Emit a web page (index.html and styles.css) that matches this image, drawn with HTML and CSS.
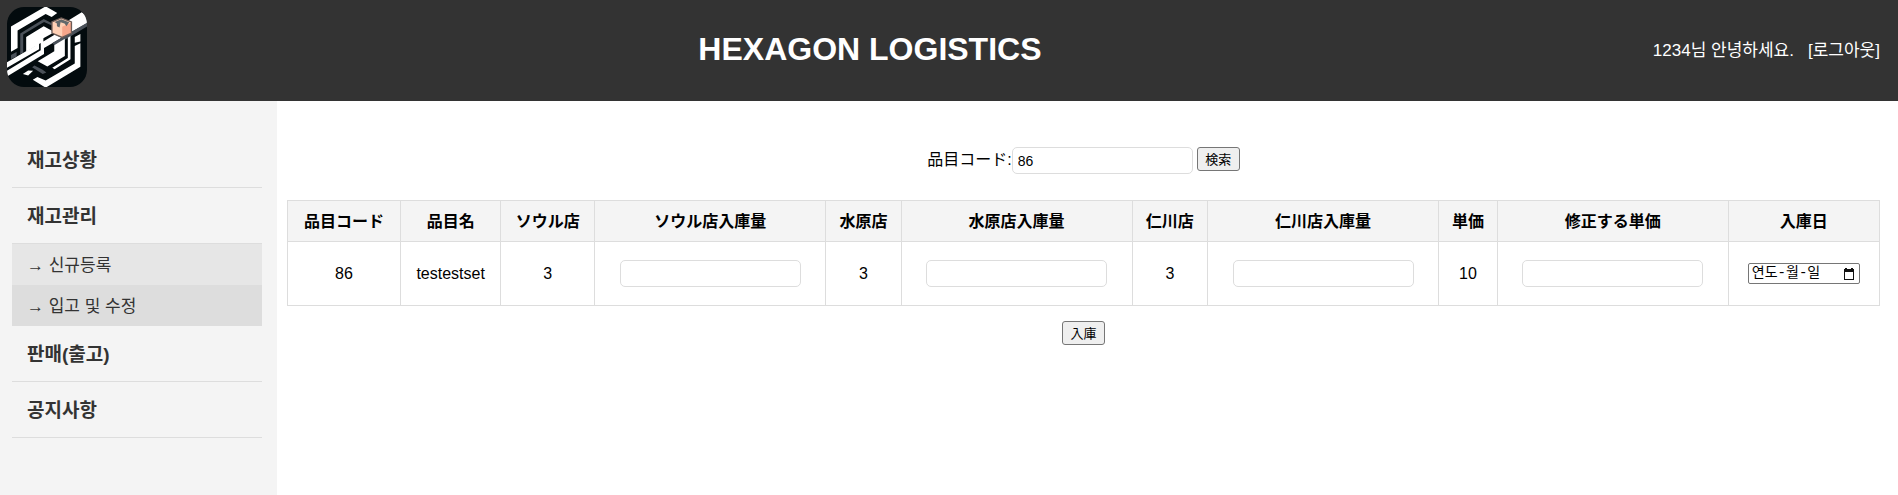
FILE: index.html
```html
<!DOCTYPE html>
<html lang="ko">
<head>
<meta charset="utf-8">
<title>HEXAGON LOGISTICS</title>
<link rel="stylesheet" href="styles.css">
</head>
<body>
<header class="header">
  <a class="logo" href="#" aria-label="HEXAGON LOGISTICS">
    <svg class="logo-image" viewBox="20 20 242 242" aria-hidden="true">
      <defs><clipPath id="logo-clip"><rect x="20" y="20" width="242" height="242" rx="52"/></clipPath></defs>
      <g clip-path="url(#logo-clip)">
        <rect x="20" y="20" width="242" height="242" fill="#030b0e"/>
        <path fill="#fff" d="M32 79 137 18 172 38 155 50 137 41 52 91V144L32 155Z"/>
        <path fill="#fff" d="M78 111 131 78 156 92V100L112 124V136L78 155Z"/>
        <path fill="#fff" d="M20 187 105 138V121L130 107V124L165 103 186 113 132 144V162L20 230V213L122 151V129L117 132V148L20 204Z"/>
        <path fill="#fff" d="M208 59 246 36 262 46V69L215 96Z"/>
        <path fill="#4a5159" d="M60 100 131 56 156 69V76L132 65 69 103V158L60 163ZM32 165 49 156V170L32 178ZM262 68V79L165 137 157 129ZM96 202 103 197 128 210 139 218 128 223Z"/>
        <path fill="#fff" d="M163 136 195 116V168L142 200 113 184 132 173 163 154Z"/>
        <path fill="#fff" d="M204 113 212 108V178L164 208 157 204 204 174Z"/>
        <path fill="#fff" d="M225 111 242 102V124L225 128ZM225 138 242 130V201L137 264 98 240 112 232 137 242 225 191ZM68 223 84 212 99 213 84 227Z"/>
        <path fill="#ffd0b5" d="M156 65 184 53 215 65V99L187 112 156 99Z"/>
        <path fill="#f6a68b" d="M187 80 215 67V99L187 112Z"/>
        <path fill="none" stroke="#6c5c57" stroke-width="4" d="M156 65 184 53 215 65V99L187 112 156 99Z"/>
        <path fill="#62686b" d="M164 65 184 57 208 66 200 78 194 70 182 66 179 82 171 78V70Z"/>
      </g>
    </svg>
  </a>
  <h1 class="title">HEXAGON LOGISTICS</h1>
  <div class="account"><span>1234님 안녕하세요.</span><a href="#">[로그아웃]</a></div>
</header>
<div class="page">
  <nav class="sidebar">
    <ul class="menu">
      <li><a class="menu-link" href="#">재고상황</a></li>
      <li><a class="menu-link" href="#">재고관리</a>
        <ul class="submenu">
          <li><a class="submenu-link" href="#">→ 신규등록</a></li>
          <li><a class="submenu-link current" href="#">→ 입고 및 수정</a></li>
        </ul>
      </li>
      <li><a class="menu-link" href="#">판매(출고)</a></li>
      <li><a class="menu-link" href="#">공지사항</a></li>
    </ul>
  </nav>
  <main class="content" lang="ja">
    <form class="search">
      <label for="code">品目コード:</label>
      <input class="field" id="code" type="text" value="86">
      <button class="button" type="button">検索</button>
    </form>
    <form class="stock">
      <table class="stock-table">
        <colgroup>
          <col class="col-code"><col class="col-name"><col class="col-seoul"><col class="col-entry"><col class="col-count"><col class="col-entry"><col class="col-count"><col class="col-entry"><col class="col-price"><col class="col-entry"><col class="col-date">
        </colgroup>
        <thead>
          <tr><th>品目コード</th><th>品目名</th><th>ソウル店</th><th>ソウル店入庫量</th><th>水原店</th><th>水原店入庫量</th><th>仁川店</th><th>仁川店入庫量</th><th>単価</th><th>修正する単価</th><th>入庫日</th></tr>
        </thead>
        <tbody>
          <tr>
            <td>86</td><td>testestset</td><td>3</td>
            <td><input class="field" type="text" aria-label="ソウル店入庫量"></td>
            <td>3</td>
            <td><input class="field" type="text" aria-label="水原店入庫量"></td>
            <td>3</td>
            <td><input class="field" type="text" aria-label="仁川店入庫量"></td>
            <td>10</td>
            <td><input class="field" type="text" aria-label="修正する単価"></td>
            <td>
              <span class="date" lang="ko">
                <input class="date-input" type="text" placeholder="연도-월-일" aria-label="入庫日">
                <button class="date-button" type="button" aria-label="달력">
                  <svg class="date-icon" viewBox="0 0 12 12" aria-hidden="true"><path fill="#111" d="M2 0h2v1h4V0h2v1h1v11H1V1h1zM2 4v7h8V4z"/></svg>
                </button>
              </span>
            </td>
          </tr>
        </tbody>
      </table>
      <button class="button" type="button">入庫</button>
    </form>
  </main>
</div>
</body>
</html>
```
FILE: styles.css
```css
* { box-sizing: border-box; }

body {
  margin: 0;
  min-height: 100vh;
  display: flex;
  flex-direction: column;
  background: #fff;
  color: #000;
  font: 16px/20px "Liberation Sans", "Noto Sans CJK KR", sans-serif;
}

a { color: inherit; text-decoration: none; }

ul { margin: 0; padding: 0; list-style: none; }

.header {
  display: flex;
  align-items: center;
  justify-content: space-between;
  padding: 7px 18px 14px 7px;
  background: #333;
  color: #fff;
}

.logo-image { display: block; width: 80px; height: 80px; }

.title { margin: 0; padding-top: 4px; font-size: 32px; line-height: 36px; }

.account { display: flex; gap: 14px; padding-top: 8px; font-size: 17px; }

.page { flex: 1; display: flex; }

.sidebar {
  flex: none;
  width: 277px;
  padding: 31px 15px 30px 12px;
  background: #f4f4f4;
  color: #333;
}

.menu-link {
  display: block;
  padding: 16px 15px 14px;
  border-bottom: 1px solid #ddd;
  font-size: 19px;
  line-height: 25px;
  font-weight: bold;
}

.submenu-link {
  display: block;
  padding: 11px 15px 9px;
  background: #e6e6e6;
  font-size: 17px;
  line-height: 21px;
}

.submenu-link.current { background: #ddd; }

.content {
  flex: 1;
  min-width: 0;
  padding: 46px 18px 20px 10px;
  font-family: "Liberation Sans", "Noto Sans CJK JP", sans-serif;
}

.search {
  display: flex;
  justify-content: center;
  align-items: flex-start;
  margin-bottom: 26px;
}

.search label { line-height: 25px; }

.search .button { margin-left: 4px; }

.field {
  width: 181px;
  height: 27px;
  padding: 5px;
  border: 1px solid #ddd;
  border-radius: 5px;
  background: #fff;
  color: #000;
  font: 14px/16px "Liberation Sans", sans-serif;
  vertical-align: middle;
}

.button {
  width: 43px;
  height: 24px;
  padding: 0;
  border: 1px solid #767676;
  border-radius: 3px;
  background: #efefef;
  color: #000;
  font: 13px/20px "Noto Sans CJK JP", sans-serif;
}

.stock {
  display: flex;
  flex-direction: column;
  align-items: center;
  gap: 15px;
}

.stock-table {
  width: 100%;
  table-layout: fixed;
  border-collapse: collapse;
  text-align: center;
}

.stock-table th,
.stock-table td { border: 1px solid #ddd; padding: 10px 0; }

.stock-table th { padding: 11px 0 9px; background: #f4f4f4; white-space: nowrap; }

.stock-table td { height: 64px; }

.col-code { width: 7.1%; }
.col-name { width: 6.3%; }
.col-seoul { width: 5.9%; }
.col-entry { width: 14.5%; }
.col-count { width: 4.75%; }
.col-price { width: 3.7%; }
.col-date { width: 9.5%; }

.date {
  display: inline-flex;
  align-items: center;
  justify-content: space-between;
  width: 112px;
  height: 21px;
  padding: 0 4px 0 3px;
  border: 1px solid #767676;
  border-radius: 2px;
  vertical-align: middle;
}

.date-input {
  width: 80px;
  height: 19px;
  padding: 0;
  border: 0;
  background: none;
  font: 14px/19px "Liberation Mono", "Noto Sans CJK KR", monospace;
}

.date-input::placeholder { color: #000; opacity: 1; }

.date-button { padding: 0; border: 0; background: none; }

.date-icon { display: block; width: 12px; height: 12px; }
```
